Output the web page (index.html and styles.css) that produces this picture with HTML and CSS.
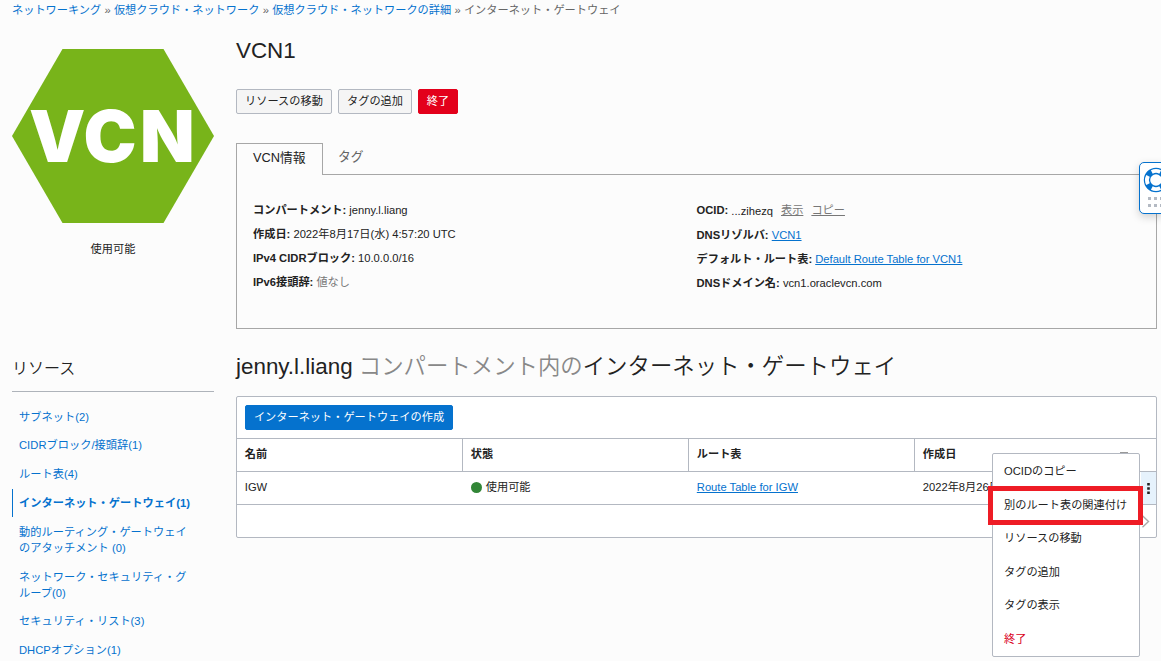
FILE: index.html
```html
<!DOCTYPE html>
<html lang="ja">
<head>
<meta charset="utf-8">
<title>VCN1</title>
<link rel="stylesheet" href="styles.css">
</head>
<body>
<nav class="breadcrumb"><a>ネットワーキング</a> » <a>仮想クラウド・ネットワーク</a> » <a>仮想クラウド・ネットワークの詳細</a> » インターネット・ゲートウェイ</nav>
<div class="layout">
  <aside class="sidebar">
    <svg class="hexagon" width="202" height="174" viewBox="0 0 202 174">
      <path d="M50.5 0H151.5L202 87L151.5 174H50.5L0 87Z" fill="#78b41a"/>
      <text class="hexagon-text" x="17 71.5 128" y="113">VCN</text>
    </svg>
    <div class="state">使用可能</div>
    <h2 class="side-title">リソース</h2>
    <ul class="side-nav">
      <li>サブネット(2)</li>
      <li>CIDRブロック/接頭辞(1)</li>
      <li>ルート表(4)</li>
      <li class="active">インターネット・ゲートウェイ(1)</li>
      <li>動的ルーティング・ゲートウェイ<br>のアタッチメント (0)</li>
      <li>ネットワーク・セキュリティ・グ<br>ループ(0)</li>
      <li>セキュリティ・リスト(3)</li>
      <li>DHCPオプション(1)</li>
    </ul>
  </aside>
  <main class="main">
    <h1 class="title">VCN1</h1>
    <div class="actions">
      <button class="btn btn-move">リソースの移動</button>
      <button class="btn btn-tag">タグの追加</button>
      <button class="btn btn-danger">終了</button>
    </div>
    <div class="tabs">
      <div class="tab tab-active">VCN情報</div>
      <div class="tab">タグ</div>
    </div>
    <section class="panel">
      <div class="info">
        <p><b>コンパートメント:</b> jenny.l.liang</p>
        <p><b>作成日:</b> 2022年8月17日(水) 4:57:20 UTC</p>
        <p><b>IPv4 CIDRブロック:</b> 10.0.0.0/16</p>
        <p><b>IPv6接頭辞:</b> <span class="muted">値なし</span></p>
      </div>
      <div class="info info-right">
        <p class="ocid"><b>OCID:</b> <span class="ocid-value">...zihezq</span><a class="quiet">表示</a><a class="quiet">コピー</a></p>
        <p><b>DNSリゾルバ:</b> <a class="link">VCN1</a></p>
        <p><b>デフォルト・ルート表:</b> <a class="link">Default Route Table for VCN1</a></p>
        <p><b>DNSドメイン名:</b> vcn1.oraclevcn.com</p>
      </div>
    </section>
    <h2 class="list-title">jenny.l.liang <span>コンパートメント内の</span>インターネット・ゲートウェイ</h2>
    <section class="table">
      <div class="toolbar"><button class="btn btn-primary">インターネット・ゲートウェイの作成</button></div>
      <div class="row head"><div>名前</div><div>状態</div><div>ルート表</div><div>作成日</div></div>
      <div class="row">
        <div>IGW</div>
        <div><span class="dot"></span>使用可能</div>
        <div><a class="link">Route Table for IGW</a></div>
        <div>2022年8月26日</div>
        <div class="kebab"><svg width="3" height="11" viewBox="0 0 3 11"><path d="M.2 0h2.6v2.6H.2zM.2 4.2h2.6v2.6H.2zM.2 8.4h2.6V11H.2z" fill="#222"/></svg></div>
      </div>
      <div class="foot"><svg width="10" height="13" viewBox="0 0 10 13"><path d="M1.5 .8L7.5 6.5L1.5 12.2" fill="none" stroke="#aaa" stroke-width="1.4"/></svg></div>
      <span class="peek"></span>
    </section>
  </main>
</div>
<div class="help">
  <svg width="22" height="50" viewBox="0 0 22 50">
    <circle cx="16" cy="17" r="9" fill="none" stroke="#0572ce" stroke-width="6.4"/>
    <g fill="none" stroke="#fff" stroke-width="3.8">
      <path d="M11.8 9A9 9 0 0 1 20.2 9"/>
      <path d="M8 12.8A9 9 0 0 0 8 21.2"/>
      <path d="M11.8 25A9 9 0 0 0 20.2 25"/>
    </g>
    <path d="M8 34h3v3H8zM14 34h3v3h-3zM20 34h2v3h-2zM8 41h3v3H8zM14 41h3v3h-3zM20 41h2v3h-2z" fill="#b4bac3"/>
  </svg>
</div>
<div class="menu">
  <div>OCIDのコピー</div>
  <div>別のルート表の関連付け</div>
  <div>リソースの移動</div>
  <div>タグの追加</div>
  <div>タグの表示</div>
  <div class="terminate">終了</div>
</div>
<div class="highlight"></div>
</body>
</html>
```
FILE: styles.css
```css
* { box-sizing: border-box; }
body {
  margin: 0;
  height: 661px;
  overflow: hidden;
  position: relative;
  background: #fcfcfc;
  color: #222;
  font: 11.2px/16px "Liberation Sans", "Noto Sans CJK JP", sans-serif;
  white-space: nowrap;
}
h1, h2, p, ul { margin: 0; padding: 0; font-weight: 400; }
a, .side-nav { color: #0572ce; }
.breadcrumb { height: 20px; padding: 2px 0 0 12px; color: #666; word-spacing: .15px; }
.layout { display: flex; gap: 22px; padding-left: 12px; }
.sidebar { width: 202px; padding-top: 29px; }
.hexagon { display: block; }
.hexagon-text { font: 900 71px Inter, "Liberation Sans", sans-serif; fill: #fff; }
.state { margin-top: 18px; text-align: center; }
.side-title { height: 45px; margin: 90px 0 10.3px; padding-top: 12px; font-size: 16px; font-weight: 350; line-height: 20px; border-bottom: 1px solid #aeb3ba; }
.side-nav { list-style: none; }
.side-nav li { padding: 6.4px 0 6.4px 7px; letter-spacing: .04px; }
.side-nav .active { padding-left: 6px; border-left: 1px solid #0572ce; font-weight: 700; }
.main { width: 921px; }
.title { padding-top: 17px; height: 69px; font-size: 22.4px; line-height: 28px; }
.actions { display: flex; gap: 6px; height: 54px; }
.btn { height: 25px; padding: 0; border: 1px solid #b3b8c1; border-radius: 2px; background: #f5f5f5; color: #222; font: inherit; line-height: 23px; }
.btn-move { width: 96px; }
.btn-tag { width: 74px; }
.btn-danger { width: 40px; background: #e3001b; border-color: #e3001b; color: #fff; }
.btn-primary { width: 208px; background: #0572ce; border-color: #0572ce; color: #fff; }
.tabs { display: flex; height: 32px; font-size: 12.8px; }
.tab { flex: 1; padding: 6px 0 0 15px; line-height: 16px; color: #666; border-bottom: 1px solid #a7a7a7; }
.tab-active { flex: none; width: 87px; padding: 6px 0 0 16px; color: #222; border: 1px solid #a7a7a7; border-bottom: 0; }
.panel { display: flex; height: 154px; padding: 23px 0 0 16px; border: 1px solid #a7a7a7; border-top: 0; }
.info { width: 443.5px; line-height: 24px; }
.info-right .ocid { height: 25px; }
.muted { color: #777; }
.ocid-value { position: relative; top: 1px; }
.quiet { margin-left: 8px; color: #777; text-decoration: underline; }
.link { text-decoration: underline; }
.list-title { height: 67px; padding-top: 22px; font-size: 22.4px; font-weight: 350; line-height: 31px; }
.list-title span { color: #888; }
.table { position: relative; height: 142px; border: 1px solid #b3b8c1; border-radius: 2px; background: #fff; }
.toolbar { height: 42px; padding: 8px; border-bottom: 1px solid #b3b8c1; }
.row { display: grid; grid-template-columns: 226px 226px 226px 226px 1fr; height: 33px; line-height: 30px; border-bottom: 1px solid #b3b8c1; }
.row > div { padding-left: 7.8px; }
.head { font-weight: 700; }
.head > div { border-right: 1px solid #b3b8c1; }
.head > div:last-child { border-right: 0; }
.dot { display: inline-block; width: 11px; height: 11px; margin-right: 4px; border-radius: 50%; background: #328637; vertical-align: -2px; }
.row .kebab { display: flex; align-items: center; justify-content: center; padding: 0 1px 0 0; background: #e6f2fc; }
.foot { display: flex; justify-content: flex-end; height: 32px; padding: 10px 5px 0 0; }
.peek { position: absolute; left: 883px; top: 55px; width: 8px; height: 1px; background: #999; }
.help { position: absolute; left: 1139px; top: 162px; width: 24px; height: 52px; border: 1px solid #0572ce; border-radius: 5px 0 0 5px; background: #fff; box-shadow: 0 3px 8px rgba(0,0,0,.18); }
.menu { position: absolute; left: 992px; top: 453px; width: 148px; height: 204px; padding: 1px 0 0 11px; border: 1px solid #b3b8c1; border-radius: 2px; background: #fff; line-height: 33.6px; }
.terminate { color: #d9001b; }
.highlight { position: absolute; left: 988px; top: 486px; width: 155px; height: 39px; border: 5px solid #ee1c25; }
```
